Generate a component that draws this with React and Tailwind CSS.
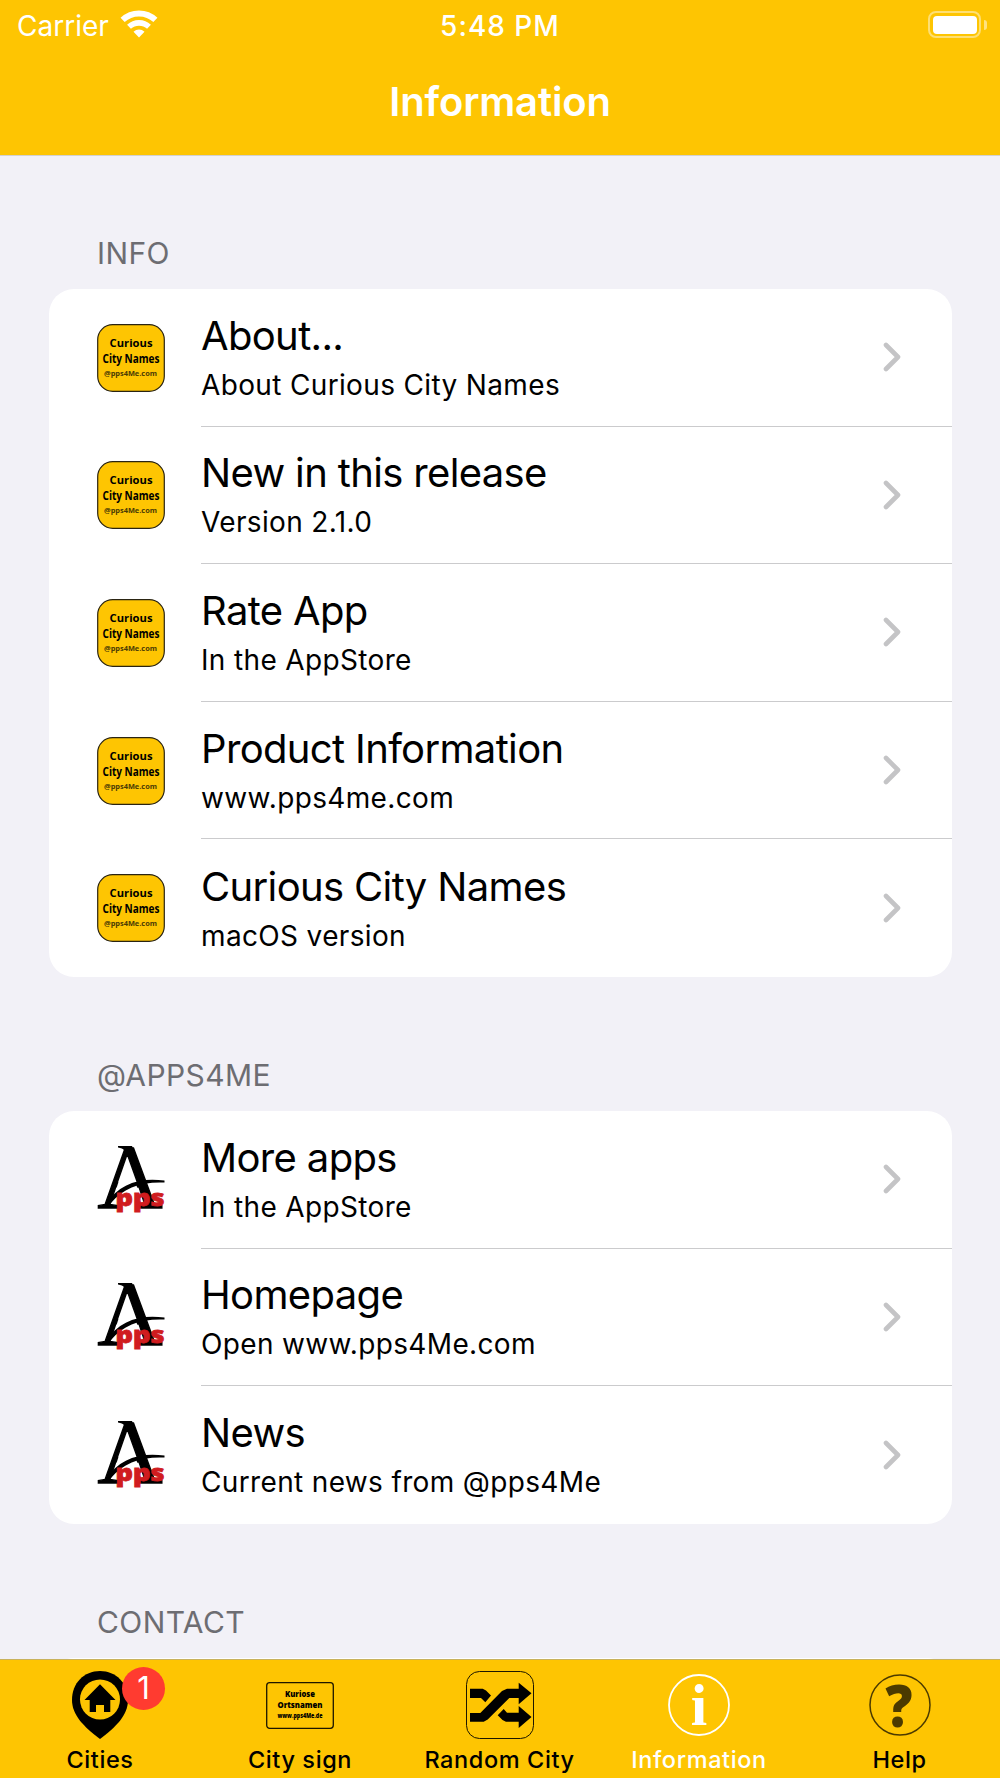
import React from 'react';

const infoItems = [
  { title: 'About...', subtitle: 'About Curious City Names' },
  { title: 'New in this release', subtitle: 'Version 2.1.0' },
  { title: 'Rate App', subtitle: 'In the AppStore' },
  { title: 'Product Information', subtitle: 'www.pps4me.com' },
  { title: 'Curious City Names', subtitle: 'macOS version' },
];

const appsItems = [
  { title: 'More apps', subtitle: 'In the AppStore' },
  { title: 'Homepage', subtitle: 'Open www.pps4Me.com' },
  { title: 'News', subtitle: 'Current news from @pps4Me' },
];

const AppIcon = () => (
  <svg className="size-[68px] shrink-0 overflow-visible" viewBox="0 0 68 68" fontFamily="'Open Sans', sans-serif" textAnchor="middle">
    <rect x="0.7" y="0.7" width="66.6" height="66.6" rx="15" fill="#fec502" stroke="#2a2412" strokeWidth="1.2" />
    <text x="34" y="23" fontSize="11.2" fontWeight="700" textLength="43">Curious</text>
    <text x="34" y="38.5" fontSize="11.5" fontWeight="700" textLength="57" lengthAdjust="spacingAndGlyphs">City Names</text>
    <text x="33.5" y="52" fontSize="7.6" fontWeight="700" fill="#4a3a05" textLength="53" lengthAdjust="spacingAndGlyphs">@pps4Me.com</text>
  </svg>
);

const AppsLogo = () => (
  <svg className="size-[68px] shrink-0 overflow-visible" viewBox="0 0 68 68">
    <text x="0.500" y="61.500" fontSize="91" fontFamily="'Liberation Serif', serif" stroke="black" strokeWidth="1.400" textLength="65" lengthAdjust="spacingAndGlyphs">A</text>
    <path d="M21 0 H35 L40 11 H30 C29 5 27 2.500 21 1.500 Z" />
    <path d="M21.500 36 H38 L41 43.500 H19 Z" fill="white" />
    <path d="M9 58 C22 38 42 31 67.500 34.500 L67.500 36.500 C44 35.500 26 42 14 57 Z" />
    <text x="18.500" y="59.700" fontSize="22" fontWeight="900" fontFamily="'Noto Sans', sans-serif" fill="#d01c1f" stroke="#d01c1f" strokeWidth="0.800" textLength="49" lengthAdjust="spacingAndGlyphs">pps</text>
  </svg>
);

const Chevron = () => (
  <svg className="h-[30px] w-[18px] shrink-0" viewBox="0 0 18 30" fill="none" stroke="#c4c4c6" strokeWidth="4.600" strokeLinecap="round" strokeLinejoin="round">
    <path d="M3 3 L15 15 L3 27" />
  </svg>
);

const Row = ({ icon, title, subtitle, last }) => (
  <div className="flex h-[137.6px] pl-[48.5px]">
    <div className="flex items-center">{icon}</div>
    <div className={`ml-[36px] flex flex-1 items-center justify-between border-[#cbcbcd] pr-[50.5px] ${last ? '' : 'border-b'}`}>
      <div className="flex flex-col gap-[7px] whitespace-nowrap text-black">
        <p className="text-[40px] leading-[48px] tracking-[-0.65px]">{title}</p>
        <p className="text-[28px] leading-[36px] tracking-[0.35px]">{subtitle}</p>
      </div>
      <Chevron />
    </div>
  </div>
);

const Section = ({ label, icon, items }) => (
  <section className="shrink-0">
    <h2 className="h-[134px] pt-[80px] pl-[48.5px] text-[30px] leading-[36px] tracking-[0.4px] text-[#6d6d72]">{label}</h2>
    <div className="min-h-[137px] rounded-[25px] bg-white">
      {items.map((item, i) => (
        <Row key={item.title} icon={icon} {...item} last={i === items.length - 1} />
      ))}
    </div>
  </section>
);

const StatusBar = () => (
  <div className="grid h-[51px] grid-cols-3 items-center">
    <div className="flex items-center gap-[11px] pl-[17px]">
      <span className="text-[28px] leading-[36px]">Carrier</span>
      <svg className="mb-[4px] h-[28px] w-[38px]" viewBox="0 0 38 28" fill="none" stroke="white">
        <path d="M2.600 9.900 A24 24 0 0 1 35.400 9.900" strokeWidth="6" />
        <path d="M9 16.800 A14.600 14.600 0 0 1 29 16.800" strokeWidth="5.600" />
        <path d="M19 27.500 L13.500 21.700 A8 8 0 0 1 24.500 21.700 Z" fill="white" stroke="none" />
      </svg>
    </div>
    <span className="text-center text-[28px] leading-[36px] font-medium tracking-[1px]">5:48 PM</span>
    <div className="mb-[2px] flex items-center justify-end gap-[3px] pr-[13px]">
      <div className="h-[27px] w-[53px] rounded-[8px] border-2 border-white/45 p-[2.500px]">
        <div className="h-full w-full rounded-[4px] bg-white" />
      </div>
      <div className="h-[10px] w-[3px] rounded-r-full bg-white/50" />
    </div>
  </div>
);

const CitiesIcon = () => (
  <div className="relative size-[68px]">
    <svg className="size-[68px]" viewBox="0 0 68 68">
      <path d="M34 0 C50 0 62 12 62 29 C62 44 50 56 34 68 C18 56 6 44 6 29 C6 12 18 0 34 0 Z" />
      <circle cx="34" cy="28.500" r="20" fill="#fec502" />
      <path d="M34 13.300 L49.500 29 H44.300 V41 H38 V34 H30 V41 H23.700 V29 H18.500 Z" />
    </svg>
    <span className="absolute -top-[4px] left-[56px] flex size-[43px] items-center justify-center rounded-full bg-[#ff3b30] text-[31px] text-white">
      1
    </span>
  </div>
);

const SignIcon = () => (
  <svg className="size-[68px] overflow-visible" viewBox="0 0 68 68" fontFamily="'Open Sans', sans-serif" fontWeight="800" textAnchor="middle">
    <rect x="0.700" y="11.700" width="66.600" height="45.600" rx="3" fill="none" stroke="#1c1600" strokeWidth="1.300" />
    <text x="34" y="26" fontSize="8.500" textLength="30" lengthAdjust="spacingAndGlyphs">Kuriose</text>
    <text x="34" y="36.500" fontSize="8.500" textLength="45" lengthAdjust="spacingAndGlyphs">Ortsnamen</text>
    <text x="34" y="46.500" fontSize="6" textLength="45" lengthAdjust="spacingAndGlyphs">www.pps4Me.de</text>
  </svg>
);

const RandomIcon = () => (
  <svg className="size-[68px]" viewBox="0 0 68 68">
    <rect x="0.500" y="0.500" width="67" height="67" rx="13" fill="none" stroke="#1c1600" />
    <path d="M4 17.700 H16.700 L20 19.500 L25 24.600 L19.300 31.300 L15 27 H4 Z" />
    <path d="M4 42 H14.300 L36 20 L41 17.700 H52.700 V11.700 L65.500 22.300 L52.700 33.300 V27 H43.300 L21.700 48.500 L17.700 50.700 H4 Z" />
    <path d="M31.700 44.300 L37.700 38 L41 41.700 H52.700 V35 L65.500 46 L52.700 57 V50.700 H40 L36.500 49 Z" />
  </svg>
);

const InformationIcon = () => (
  <svg className="size-[68px] overflow-visible" viewBox="0 0 68 68">
    <circle cx="34" cy="34" r="30" fill="none" stroke="white" strokeWidth="1.800" />
    <text x="34" y="53.500" fontSize="59" fontWeight="700" fontFamily="'Liberation Serif', serif" fill="white" textAnchor="middle">i</text>
  </svg>
);

const HelpIcon = () => (
  <svg className="size-[68px] overflow-visible" viewBox="0 0 68 68">
    <circle cx="34" cy="34" r="30" fill="none" stroke="#4b3a00" strokeWidth="1.500" />
    <text x="33" y="55.500" fontSize="58" fontWeight="800" fontFamily="'Open Sans', sans-serif" fill="#4b3a00" textAnchor="middle" textLength="27" lengthAdjust="spacingAndGlyphs">?</text>
  </svg>
);

const tabs = [
  { label: 'Cities', icon: <CitiesIcon /> },
  { label: 'City sign', icon: <SignIcon /> },
  { label: 'Random City', icon: <RandomIcon /> },
  { label: 'Information', icon: <InformationIcon />, active: true },
  { label: 'Help', icon: <HelpIcon /> },
];

const App = () => {
  return (
    <div className="flex h-[1778px] w-[1000px] flex-col overflow-hidden bg-[#f2f1f7] font-['Inter',sans-serif]">
      <header className="h-[155px] shrink-0 bg-[#fec502] text-white">
        <StatusBar />
        <h1 className="mt-[27px] text-center text-[40px] leading-[48px] font-semibold tracking-[-0.15px]">Information</h1>
      </header>
      <main className="flex min-h-0 flex-1 flex-col overflow-hidden border-t border-[#d3d1cf] px-[48.5px]">
        <div className="-mt-[1px] flex flex-col">
          <Section label="INFO" icon={<AppIcon />} items={infoItems} />
          <Section label="@APPS4ME" icon={<AppsLogo />} items={appsItems} />
          <Section label="CONTACT" items={[]} />
        </div>
      </main>
      <nav className="grid h-[119px] shrink-0 grid-cols-[200px_200px_199px_200px_201px] border-t border-[#c9b25c] bg-[#fec502]">
        {tabs.map((tab) => (
          <div key={tab.label} className={`flex flex-col items-center pt-[11px] ${tab.active ? 'text-white' : 'text-black'}`}>
            {tab.icon}
            <span className="mt-[5px] text-[23.500px] leading-[32px] font-medium tracking-[0.600px] whitespace-nowrap">{tab.label}</span>
          </div>
        ))}
      </nav>
    </div>
  );
};

export default App;
